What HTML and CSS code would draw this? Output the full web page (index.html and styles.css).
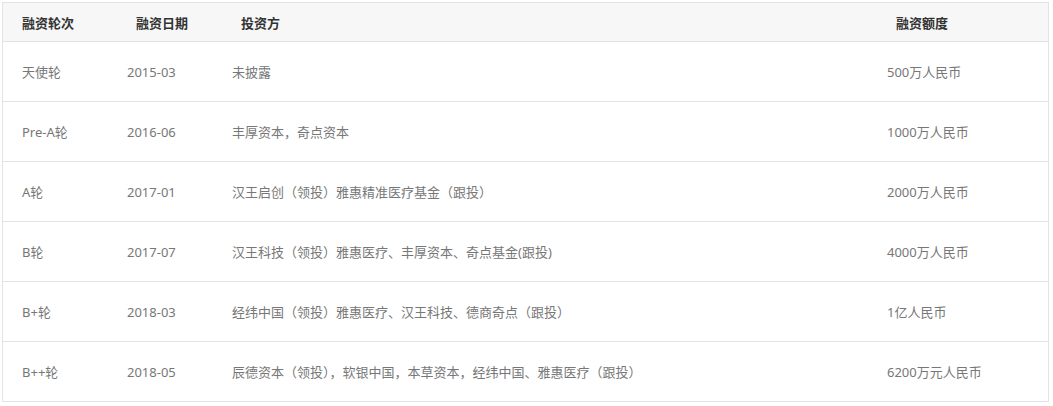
FILE: index.html
```html
<!DOCTYPE html>
<html lang="zh-CN">
<head>
<meta charset="utf-8">
<title>融资历程</title>
<link rel="stylesheet" href="styles.css">
</head>
<body>
<table class="fin">
  <colgroup>
    <col class="c1"><col class="c2"><col class="c3"><col class="c4">
  </colgroup>
  <thead>
    <tr>
      <th class="h1">融资轮次</th>
      <th>融资日期</th>
      <th>投资方</th>
      <th>融资额度</th>
    </tr>
  </thead>
  <tbody>
    <tr><td>天使轮</td><td>2015-03</td><td>未披露</td><td>500万人民币</td></tr>
    <tr><td>Pre-A轮</td><td>2016-06</td><td>丰厚资本，奇点资本</td><td>1000万人民币</td></tr>
    <tr><td>A轮</td><td>2017-01</td><td>汉王启创（领投）雅惠精准医疗基金（跟投）</td><td>2000万人民币</td></tr>
    <tr><td>B轮</td><td>2017-07</td><td>汉王科技（领投）雅惠医疗、丰厚资本、奇点基金(跟投)</td><td>4000万人民币</td></tr>
    <tr><td>B+轮</td><td>2018-03</td><td>经纬中国（领投）雅惠医疗、汉王科技、德商奇点（跟投）</td><td>1亿人民币</td></tr>
    <tr><td>B++轮</td><td>2018-05</td><td>辰德资本（领投），软银中国，本草资本，经纬中国、雅惠医疗（跟投）</td><td>6200万元人民币</td></tr>
  </tbody>
</table>
</body>
</html>
```
FILE: styles.css
```css
html, body {
  margin: 0;
  padding: 0;
  background: #fff;
}
body {
  padding: 2px 0 0 2px;
  font-family: "Noto Sans", "Noto Sans CJK SC", sans-serif;
  font-size: 13px;
}
.fin {
  width: 1047px;
  table-layout: fixed;
  border-collapse: separate;
  border-spacing: 0;
  border: 1px solid #e3e3e3;
}
.c1 { width: 105px; }
.c2 { width: 105px; }
.c3 { width: 655px; }
.c4 { width: 180px; }
.fin th {
  height: 38px;
  padding: 0 0 0 28px;
  background: #f7f7f7;
  color: #333;
  font-weight: bold;
  text-align: left;
  vertical-align: middle;
  white-space: nowrap;
}
.fin th.h1 {
  padding-left: 19px;
}
.fin td {
  height: 59px;
  padding: 0 0 0 19px;
  border-top: 1px solid #e3e3e3;
  color: #777;
  vertical-align: middle;
  white-space: nowrap;
}
```
